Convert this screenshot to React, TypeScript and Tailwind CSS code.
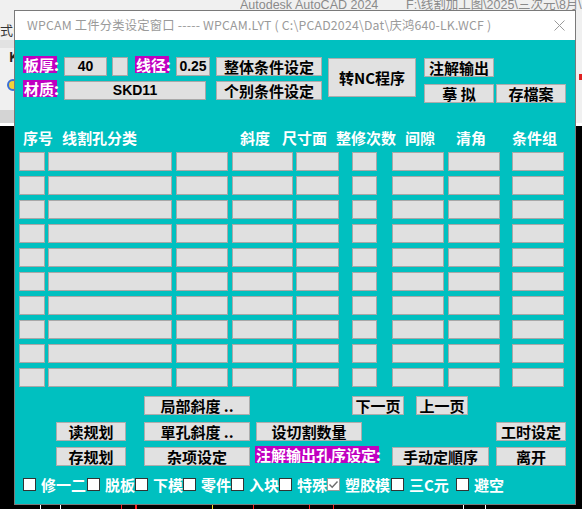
import React from 'react';

const CJK = "font-['Noto_Sans_CJK_SC',sans-serif]";

function Btn({ label, className = '' }: { label: string; className?: string }) {
  return (
    <div
      className={`h-[19px] bg-[#e1e1e1] border border-[#adadad] flex items-center justify-center text-[15px] leading-none font-bold text-black whitespace-nowrap ${className}`}
    >
      {label}
    </div>
  );
}

function Tag({ label, className = '' }: { label: string; className?: string }) {
  return (
    <div
      className={`h-[17px] bg-[#c000c0] text-white font-bold text-[15px] leading-[17px] px-[1px] whitespace-nowrap ${className}`}
    >
      {label}
    </div>
  );
}

function Field({ value = '', className = '' }: { value?: string; className?: string }) {
  return (
    <div
      className={`h-[19px] bg-[#e0e0e0] border border-[#a8a8a8] flex items-center justify-center font-['Liberation_Sans',sans-serif] font-bold text-[14px] text-black ${className}`}
    >
      {value}
    </div>
  );
}

const headers = [
  { t: '序号', w: 'w-[39px]' },
  { t: '线割孔分类', w: 'w-[178px]' },
  { t: '斜度', w: 'w-[42px]' },
  { t: '尺寸面', w: 'w-[54px]' },
  { t: '整修次数', w: 'w-[69px]' },
  { t: '间隙', w: 'w-[51px]' },
  { t: '清角', w: 'w-[56px]' },
  { t: '条件组', w: 'w-[60px]' },
];

const cols = [
  'ml-[4px] w-[26px]',
  'ml-[3px] w-[124px]',
  'ml-[4px] w-[52px]',
  'ml-[4px] w-[61px]',
  'ml-[3px] w-[43px]',
  'ml-[13px] w-[25px]',
  'ml-[15px] w-[52px]',
  'ml-[4px] w-[52px]',
  'ml-[12px] w-[52px]',
];

const checks = [
  { t: '修一二', w: 'w-[64px]', on: false },
  { t: '脱板', w: 'w-[48px]', on: false },
  { t: '下模', w: 'w-[48px]', on: false },
  { t: '零件', w: 'w-[48px]', on: false },
  { t: '入块', w: 'w-[48px]', on: false },
  { t: '特殊', w: 'w-[48px]', on: false },
  { t: '塑胶模', w: 'w-[64px]', on: true },
  { t: '三C元', w: 'w-[65px]', on: false },
  { t: '避空', w: 'w-[60px]', on: false },
];

function Check({ on }: { on: boolean }) {
  return (
    <div
      className={`w-[13px] h-[13px] bg-white border shrink-0 flex items-center justify-center ${
        on ? 'border-[#9a9a9a]' : 'border-[#333333]'
      }`}
    >
      {on && (
        <svg width="11" height="11" viewBox="0 0 11 11">
          <polyline points="1.5,5.5 4.2,8.3 9.5,2.5" fill="none" stroke="#6d6d6d" strokeWidth="1.4" />
        </svg>
      )}
    </div>
  );
}

export default function App() {
  return (
    <div className={`relative w-[582px] h-[509px] overflow-hidden bg-black ${CJK}`}>
      {/* AutoCAD behind the dialog */}
      <div className="absolute left-0 top-0 w-[582px] h-[123px] bg-[#f0f0f0]" />
      <div className="absolute left-0 top-[40px] w-[14px] h-[8px] bg-[#e2e2e2]" />
      <div className="absolute left-0 top-[110px] w-[14px] h-[13px] bg-[#d4d4d4]" />
      <div className="absolute left-0 top-[123px] w-[582px] h-[3px] bg-white" />
      <div className="absolute left-0 top-[22px] text-[13px] leading-[16px] text-[#333]">式(C</div>
      <div className="absolute left-[9px] top-[50px] text-[13px] leading-[14px] font-bold text-[#222]">K</div>
      <div className="absolute left-[7px] top-[79px] w-[12px] h-[12px] rounded-full border-2 border-[#3a6fd8] bg-[#f2d23a]" />
      <div className="absolute left-[579px] top-[74px] w-[3px] h-[6px] bg-[#e02020]" />
      <div className="absolute left-[240px] top-[-3px] w-[342px] overflow-hidden whitespace-nowrap text-[12.5px] leading-[16px] text-[#8a8a8a] font-['Liberation_Sans','Noto_Sans_CJK_SC',sans-serif]">
        Autodesk AutoCAD 2024&nbsp;&nbsp;&nbsp;&nbsp;&nbsp;&nbsp;&nbsp;&nbsp;F:\线割加工图\2025\三次元\8月\1
      </div>
      {/* bottom drawing lines */}
      <div className="absolute left-[40px] top-[505px] w-[1px] h-[4px] bg-white" />
      <div className="absolute left-[60px] top-[505px] w-[1px] h-[4px] bg-white" />
      <div className="absolute left-[121px] top-[505px] w-[1px] h-[4px] bg-[#ff2020]" />
      <div className="absolute left-[135px] top-[505px] w-[2px] h-[4px] bg-[#ff2020]" />
      <div className="absolute left-[212px] top-[505px] w-[1px] h-[4px] bg-[#f0e020]" />
      <div className="absolute left-[253px] top-[505px] w-[1px] h-[4px] bg-[#ff2020]" />
      <div className="absolute left-[309px] top-[505px] w-[1px] h-[4px] bg-[#ff2020]" />
      <div className="absolute left-[333px] top-[505px] w-[1px] h-[4px] bg-[#ff2020]" />
      <div className="absolute left-[463px] top-[505px] w-[1px] h-[4px] bg-white" />
      <div className="absolute left-[485px] top-[505px] w-[1px] h-[4px] bg-white" />

      {/* dialog window */}
      <div className="absolute left-[14px] top-[10px] w-[562px] h-[495px] border border-[#7a7a7a] flex flex-col bg-[#00c0c0]">
        <div className="h-[29px] bg-white flex items-center pl-[12px] pr-[10px] shrink-0">
          <div className="flex-1 text-[12.3px] text-[#9a9a9a] whitespace-nowrap tracking-[0.2px]">
            WPCAM 工件分类设定窗口 ----- WPCAM.LYT ( C:\PCAD2024\Dat\庆鸿640-LK.WCF )
          </div>
          <svg width="11" height="11" viewBox="0 0 11 11" className="shrink-0">
            <path d="M0.5 0.5 L10.5 10.5 M10.5 0.5 L0.5 10.5" stroke="#9a9a9a" strokeWidth="1" />
          </svg>
        </div>

        <div className="flex-1 flex flex-col">
          {/* top controls */}
          <div className="flex items-start pl-[8px] pt-[17px]">
            <div className="flex flex-col gap-[5px]">
              <div className="flex items-start">
                <Tag label="板厚:" className="w-[34px] -mt-[1px]" />
                <Field value="40" className="ml-[7px] w-[43px]" />
                <Field className="ml-[5px] w-[16px]" />
                <Tag label="线径:" className="ml-[7px] w-[34px] -mt-[1px]" />
                <Field value="0.25" className="ml-[7px] w-[34px]" />
              </div>
              <div className="flex items-start">
                <Tag label="材质:" className="w-[34px] -mt-[1px]" />
                <Field value="SKD11" className="ml-[7px] w-[142px]" />
              </div>
            </div>
            <div className="ml-[6px] flex flex-col gap-[5px]">
              <Btn label="整体条件设定" className="w-[106px]" />
              <Btn label="个别条件设定" className="w-[106px]" />
            </div>
            <Btn label="转NC程序" className="ml-[6px] mt-[1px] w-[88px] h-[39px]" />
            <div className="ml-[8px] mt-[1px] flex flex-col gap-[7px]">
              <Btn label="注解输出" className="w-[70px]" />
              <div className="flex gap-[2px]">
                <Btn label="摹 拟" className="w-[70px]" />
                <Btn label="存檔案" className="w-[70px]" />
              </div>
            </div>
          </div>

          {/* table header */}
          <div className="flex pl-[8px] mt-[27px] h-[15px] text-[15px] leading-[15px] font-bold text-white whitespace-nowrap">
            {headers.map((h) => (
              <div key={h.t} className={h.w}>
                {h.t}
              </div>
            ))}
          </div>

          {/* table rows */}
          <div className="mt-[7px] flex flex-col gap-[5px]">
            {Array.from({ length: 10 }).map((_, r) => (
              <div key={r} className="flex">
                {cols.map((c, i) => (
                  <div key={i} className={`${c} h-[19px] bg-[#e0e0e0] border border-[#a8a8a8]`} />
                ))}
              </div>
            ))}
          </div>

          {/* bottom buttons */}
          <div className="flex mt-[9px]">
            <Btn label="局部斜度 .." className="ml-[129px] w-[106px]" />
            <Btn label="下一页" className="ml-[102px] w-[52px]" />
            <Btn label="上一页" className="ml-[12px] w-[52px]" />
          </div>
          <div className="flex mt-[7px]">
            <Btn label="读规划" className="ml-[41px] w-[70px]" />
            <Btn label="單孔斜度 .." className="ml-[18px] w-[106px]" />
            <Btn label="设切割数量" className="ml-[6px] w-[106px]" />
            <Btn label="工时设定" className="ml-[134px] w-[70px]" />
          </div>
          <div className="flex items-start mt-[6px]">
            <Btn label="存规划" className="ml-[41px] w-[70px]" />
            <Btn label="杂项设定" className="ml-[18px] w-[106px]" />
            <Tag label="注解输出孔序设定:" className="ml-[5px] w-[124px] -mt-[1px]" />
            <Btn label="手动定順序" className="ml-[13px] w-[97px]" />
            <Btn label="离开" className="ml-[7px] w-[70px]" />
          </div>

          {/* checkboxes */}
          <div className="flex mt-[11px] pl-[8px]">
            {checks.map((c) => (
              <div key={c.t} className={`${c.w} flex items-center gap-[5px] shrink-0`}>
                <Check on={c.on} />
                <span className="text-[15px] leading-[15px] font-bold text-white whitespace-nowrap">{c.t}</span>
              </div>
            ))}
          </div>
        </div>
      </div>
    </div>
  );
}
